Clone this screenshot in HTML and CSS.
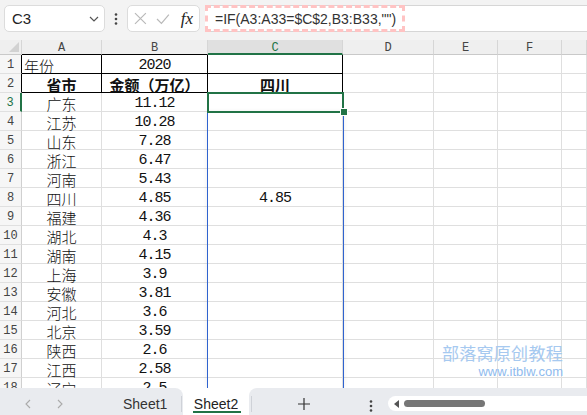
FILE: index.html
```html
<!DOCTYPE html>
<html lang="zh-CN">
<head>
<meta charset="utf-8">
<title>Sheet</title>
<link rel="stylesheet" href="styles.css">
</head>
<body>
<div class="topbar">
  <div class="namebox">
    <span>C3</span>
    <svg width="10" height="6" viewBox="0 0 10 6"><polyline points="1,1 5,5 9,1" fill="none" stroke="#555" stroke-width="1.2"/></svg>
  </div>
  <div class="vdots">
    <svg width="4" height="12" viewBox="0 0 4 12"><circle cx="2" cy="1.5" r="1.3" fill="#444"/><circle cx="2" cy="6" r="1.3" fill="#444"/><circle cx="2" cy="10.5" r="1.3" fill="#444"/></svg>
  </div>
  <div class="fxbox">
    <svg width="13" height="13" viewBox="0 0 13 13"><path d="M1 1 L12 12 M12 1 L1 12" stroke="#b9b9b9" stroke-width="1.2" fill="none"/></svg>
    <svg width="14" height="12" viewBox="0 0 14 12"><polyline points="1,6 5.5,10.5 13,1.5" stroke="#b9b9b9" stroke-width="1.2" fill="none"/></svg>
    <span class="fx">fx</span>
  </div>
  <div class="formula">
    <div class="anno">=IF(A3:A33=$C$2,B3:B33,"")</div>
  </div>
</div>

<div class="sheet">
  <div class="grid">
    <div class="ch corner"></div><div class="ch tbt">A</div><div class="ch tbt">B</div><div class="ch sel">C</div><div class="ch">D</div><div class="ch">E</div><div class="ch">F</div><div class="ch"></div>

    <div class="rh tbl">1</div><div class="c tb left">年份</div><div class="c tb num">2020</div><div class="c tb"></div><div class="c"></div><div class="c"></div><div class="c"></div><div class="c"></div>
    <div class="rh tbl">2</div><div class="c tb bold">省市</div><div class="c tb bold">金额（万亿）</div><div class="c tb bold">四川</div><div class="c"></div><div class="c"></div><div class="c"></div><div class="c"></div>
    <div class="rh act">3</div><div class="c">广东</div><div class="c num">11.12</div><div class="c"></div><div class="c"></div><div class="c"></div><div class="c"></div><div class="c"></div>
    <div class="rh">4</div><div class="c">江苏</div><div class="c num">10.28</div><div class="c"></div><div class="c"></div><div class="c"></div><div class="c"></div><div class="c"></div>
    <div class="rh">5</div><div class="c">山东</div><div class="c num">7.28</div><div class="c"></div><div class="c"></div><div class="c"></div><div class="c"></div><div class="c"></div>
    <div class="rh">6</div><div class="c">浙江</div><div class="c num">6.47</div><div class="c"></div><div class="c"></div><div class="c"></div><div class="c"></div><div class="c"></div>
    <div class="rh">7</div><div class="c">河南</div><div class="c num">5.43</div><div class="c"></div><div class="c"></div><div class="c"></div><div class="c"></div><div class="c"></div>
    <div class="rh">8</div><div class="c">四川</div><div class="c num">4.85</div><div class="c num">4.85</div><div class="c"></div><div class="c"></div><div class="c"></div><div class="c"></div>
    <div class="rh">9</div><div class="c">福建</div><div class="c num">4.36</div><div class="c"></div><div class="c"></div><div class="c"></div><div class="c"></div><div class="c"></div>
    <div class="rh">10</div><div class="c">湖北</div><div class="c num">4.3</div><div class="c"></div><div class="c"></div><div class="c"></div><div class="c"></div><div class="c"></div>
    <div class="rh">11</div><div class="c">湖南</div><div class="c num">4.15</div><div class="c"></div><div class="c"></div><div class="c"></div><div class="c"></div><div class="c"></div>
    <div class="rh">12</div><div class="c">上海</div><div class="c num">3.9</div><div class="c"></div><div class="c"></div><div class="c"></div><div class="c"></div><div class="c"></div>
    <div class="rh">13</div><div class="c">安徽</div><div class="c num">3.81</div><div class="c"></div><div class="c"></div><div class="c"></div><div class="c"></div><div class="c"></div>
    <div class="rh">14</div><div class="c">河北</div><div class="c num">3.6</div><div class="c"></div><div class="c"></div><div class="c"></div><div class="c"></div><div class="c"></div>
    <div class="rh">15</div><div class="c">北京</div><div class="c num">3.59</div><div class="c"></div><div class="c"></div><div class="c"></div><div class="c"></div><div class="c"></div>
    <div class="rh">16</div><div class="c">陕西</div><div class="c num">2.6</div><div class="c"></div><div class="c"></div><div class="c"></div><div class="c"></div><div class="c"></div>
    <div class="rh">17</div><div class="c">江西</div><div class="c num">2.58</div><div class="c"></div><div class="c"></div><div class="c"></div><div class="c"></div><div class="c"></div>
    <div class="rh">18</div><div class="c">辽宁</div><div class="c num">2.5</div><div class="c"></div><div class="c"></div><div class="c"></div><div class="c"></div><div class="c"></div>
  </div>

  <div class="colsel"></div>
  <div class="active"></div>
  <div class="handle"></div>

  <div class="wm">
    <div class="wm1">部落窝原创教程</div>
    <div class="wm2">www.itblw.com</div>
  </div>
</div>

<div class="tabbar">
  <div class="tabs-left">
    <svg class="nav" width="7" height="10" viewBox="0 0 7 10"><polyline points="6,1 2,5 6,9" fill="none" stroke="#aaa" stroke-width="1.1"/></svg>
    <svg class="nav nav2" width="7" height="10" viewBox="0 0 7 10"><polyline points="1,1 5,5 1,9" fill="none" stroke="#aaa" stroke-width="1.1"/></svg>
    <span class="tab">Sheet1</span>
    <span class="divider"></span>
  </div>
  <div class="tab-active"><span>Sheet2</span></div>
  <div class="tabs-right">
    <span class="divider"></span>
    <svg class="plus" width="12" height="12" viewBox="0 0 12 12"><path d="M6 0 V12 M0 6 H12" stroke="#333" stroke-width="1.2"/></svg>
    <svg class="bdots" width="4" height="12" viewBox="0 0 4 12"><circle cx="2" cy="1.5" r="1.3" fill="#444"/><circle cx="2" cy="6" r="1.3" fill="#444"/><circle cx="2" cy="10.5" r="1.3" fill="#444"/></svg>
    <div class="hscroll">
      <span class="tri"></span>
      <span class="thumb"></span>
    </div>
  </div>
</div>
</body>
</html>
```

FILE: styles.css
```css
* { box-sizing: border-box; }

body {
  margin: 0;
  width: 587px;
  height: 415px;
  overflow: hidden;
  background: #fff;
  font-family: "Liberation Sans", Arial, sans-serif;
}

/* ---------- formula bar ---------- */
.topbar {
  height: 40px;
  background: #f3f3f3;
  display: flex;
  align-items: flex-start;
  padding: 5px 0 0 4px;
}

.namebox {
  width: 101px;
  height: 27px;
  background: #fff;
  border: 1px solid #dcdcdc;
  border-radius: 5px;
  display: flex;
  align-items: center;
  justify-content: space-between;
  padding: 0 5px 0 7px;
  font-size: 15px;
  color: #222;
}

.vdots {
  width: 22px;
  height: 27px;
  display: flex;
  align-items: center;
  justify-content: center;
}

.fxbox {
  width: 73px;
  height: 27px;
  background: #fff;
  border: 1px solid #dcdcdc;
  border-radius: 5px;
  display: flex;
  align-items: center;
  padding: 0 6px 0 6px;
  gap: 9px;
}

.fx {
  font-family: "Liberation Serif", "Times New Roman", serif;
  font-style: italic;
  font-size: 17px;
  color: #222;
  margin-left: 2px;
}

.formula {
  margin-left: 5px;
  flex: 1;
  height: 27px;
  background: #fff;
  border-top: 1px solid #d6d6d6;
  border-bottom: 1px solid #d6d6d6;
}

.anno {
  width: 200px;
  height: 27px;
  margin-top: -1px;
  border: 3px dashed #ffc3c3;
  padding-left: 7px;
  display: flex;
  align-items: center;
  font-size: 14px;
  color: #333;
  white-space: nowrap;
}

/* ---------- sheet ---------- */
.sheet {
  position: relative;
  height: 348px;
  overflow: hidden;
}

.grid {
  display: grid;
  grid-template-columns: 22px 80px 106px 135px 91px 64px 64px 25px;
  grid-template-rows: 15px;
  grid-auto-rows: 19px;
}

.ch {
  background: #efefef;
  border-right: 1px solid #d6d6d6;
  border-bottom: 1px solid #c9c9c9;
  font-family: "Liberation Mono", monospace;
  font-size: 12px;
  color: #444;
  display: flex;
  align-items: center;
  justify-content: center;
  padding-top: 1px;
}

.ch.tbt { border-bottom-color: #000; }

.ch.sel {
  background: #e0e0e0;
  color: #217346;
  border-bottom: 2px solid #217346;
  padding-top: 2px;
}

.corner { position: relative; }
.corner::after {
  content: "";
  position: absolute;
  right: 2px;
  bottom: 2px;
  width: 0;
  height: 0;
  border-left: 10px solid transparent;
  border-bottom: 10px solid #d2d2d2;
}

.rh {
  background: #f6f6f6;
  border-right: 1px solid #d0d0d0;
  border-bottom: 1px solid #e0e0e0;
  font-family: "Liberation Mono", monospace;
  font-size: 12px;
  color: #444;
  display: flex;
  align-items: center;
  justify-content: center;
  padding-top: 2px;
}

.rh.tbl { border-right-color: #000; }
.rh.act {
  color: #217346;
  border-right: 2px solid #217346;
}

.c {
  border-right: 1px solid #dfdfdf;
  border-bottom: 1px solid #dfdfdf;
  display: flex;
  align-items: center;
  justify-content: center;
  padding-top: 3px;
  font-family: "Noto Sans CJK SC", sans-serif;
  font-weight: 300;
  font-size: 15px;
  line-height: 15px;
  color: #111;
  white-space: nowrap;
  overflow: visible;
}

.c.tb {
  border-right-color: #000;
  border-bottom-color: #000;
}

.c.left {
  justify-content: flex-start;
  padding-left: 2px;
}

.c.bold { font-weight: 700; }

.num {
  font-family: "Liberation Mono", monospace;
  font-weight: 400;
  font-size: 15px;
  letter-spacing: -1px;
}

/* selection overlays */
.colsel {
  position: absolute;
  left: 207px;
  top: 72px;
  width: 137px;
  bottom: 0;
  border-left: 1px solid #2f63cf;
  border-right: 1px solid #2f63cf;
  box-shadow: 0 0 5px rgba(0, 0, 0, 0.08);
}

.active {
  position: absolute;
  left: 207px;
  top: 52px;
  width: 137px;
  height: 21px;
  border: 2px solid #217346;
}

.handle {
  position: absolute;
  left: 340px;
  top: 68px;
  width: 8px;
  height: 8px;
  background: #217346;
  border: 1px solid #fff;
}

.wm {
  position: absolute;
  right: 24px;
  top: 303px;
  text-align: right;
}

.wm1 {
  font-family: "Noto Sans CJK SC", sans-serif;
  font-size: 17px;
  line-height: 20px;
  color: #a6c9f0;
  letter-spacing: 0.3px;
}

.wm2 {
  font-family: "Liberation Sans", Arial, sans-serif;
  font-size: 13px;
  line-height: 18px;
  color: #8fbbee;
}

/* ---------- tab bar ---------- */
.tabbar {
  height: 27px;
  display: flex;
  background: #fff;
}

.tabs-left {
  width: 183px;
  background: #e9ebef;
  border-top-right-radius: 8px;
  display: flex;
  align-items: center;
  padding-top: 4px;
}

.nav { margin-left: 24px; }
.nav2 { margin-left: 26px; }

.tab {
  font-size: 14px;
  color: #333;
  margin-left: 59px;
}

.divider {
  width: 1px;
  height: 16px;
  background: #cfd2d8;
}

.tabs-left .divider { margin-left: auto; margin-right: 1px; }

.tab-active {
  width: 66px;
  display: flex;
  align-items: center;
  justify-content: center;
  padding-top: 4px;
  position: relative;
  font-size: 14px;
  color: #222;
}

.tab-active::after {
  content: "";
  position: absolute;
  left: 10px;
  right: 8px;
  bottom: 2px;
  height: 2px;
  background: #217346;
}

.tabs-right {
  flex: 1;
  background: #e9ebef;
  border-top-left-radius: 8px;
  display: flex;
  align-items: center;
  padding-top: 4px;
}

.tabs-right .divider { margin-left: 2px; }

.plus { margin-left: 46px; }
.bdots { margin-left: 59px; margin-top: 5px; }

.hscroll {
  margin-left: 15px;
  flex: 1;
  height: 15px;
  background: #fff;
  border-radius: 8px 0 0 8px;
  display: flex;
  align-items: center;
  padding-left: 6px;
}

.tri {
  width: 0;
  height: 0;
  border-top: 4px solid transparent;
  border-bottom: 4px solid transparent;
  border-right: 5px solid #555;
}

.thumb {
  margin-left: 5px;
  width: 81px;
  height: 7px;
  background: #767676;
  border-radius: 4px;
}
```
